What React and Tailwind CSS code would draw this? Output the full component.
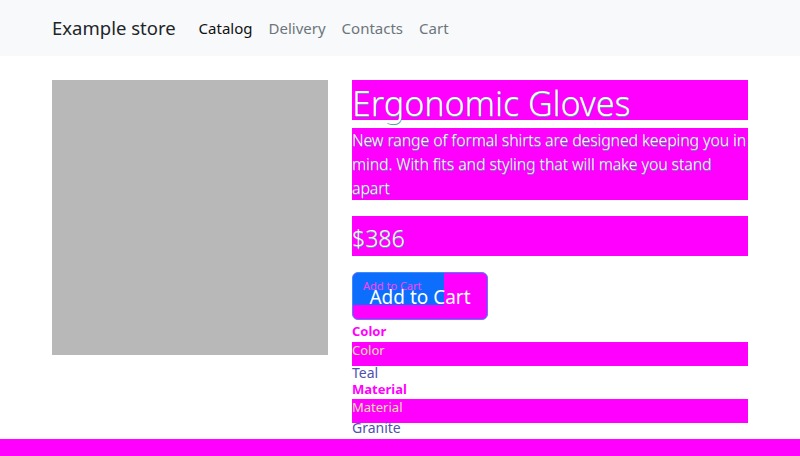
export default function App() {
  const glitch = "text-white [text-shadow:0.5px_0.5px_#5aa0a8]";
  return (
    <div className="min-h-[456px] bg-white flex flex-col [font-family:'Noto_Sans','Open_Sans',sans-serif] text-[#212529]">
      {/* Navbar */}
      <nav className="h-14 bg-[#f8f9fa] shrink-0">
        <div className="w-[720px] mx-auto px-3 h-full flex items-center">
          <span className="text-[18.5px] text-[#212529] mr-[23px]">Example store</span>
          <div className="flex items-center gap-4 text-[15px]">
            <a className="text-[#111]">Catalog</a>
            <a className="text-[#6c757d]">Delivery</a>
            <a className="text-[#6c757d]">Contacts</a>
            <a className="text-[#6c757d]">Cart</a>
          </div>
        </div>
      </nav>

      {/* Product */}
      <main className="flex-1">
        <div className="w-[720px] mx-auto mt-6 flex">
          <div className="w-[300px] px-3 shrink-0">
            <div className="w-[276px] h-[275px] bg-[#b8b8b8]" />
          </div>
          <div className="w-[420px] px-3">
            <h1 className={`h-10 bg-[#ff00ff] text-[34px] font-light leading-[46px] ${glitch}`}>
              Ergonomic Gloves
            </h1>
            <p className={`mt-2 h-[72px] bg-[#ff00ff] text-[15.7px] font-light leading-6 ${glitch}`}>
              New range of formal shirts are designed keeping you in mind. With fits and styling that will make you stand apart
            </p>
            <div className={`mt-4 h-10 bg-[#ff00ff] text-[23px] font-light leading-[44px] ${glitch}`}>
              $386
            </div>
            <button className="mt-4 relative w-[136px] h-12 rounded-md bg-[#ff00ff] border border-[#3d8bfd] overflow-hidden">
              <span className="absolute left-0 top-0 w-[91px] h-8 bg-[#0d6efd]" />
              <span className="absolute left-[10px] top-[5px] text-[11px] text-[#ff40ff] leading-4">Add to Cart</span>
              <span className="relative top-[2px] text-[19px] text-white leading-none">Add to Cart</span>
            </button>
            <div className="text-[13px] font-bold text-[#ff00ff] leading-4 mt-[3px]">Color</div>
            <div className="mt-[3px] h-6 bg-[#ff00ff] text-[13px] leading-4 text-[#e8e0a0]">Color</div>
            <div className="text-[14px] leading-[14px] text-[#5050b0]">Teal</div>
            <div className="text-[13px] font-bold text-[#ff00ff] leading-4 mt-px">Material</div>
            <div className="mt-[2px] h-6 bg-[#ff00ff] text-[13px] leading-4 text-[#e8e0a0]">Material</div>
            <div className="text-[14px] leading-[14px] text-[#5050b0] -mt-[2px]">Granite</div>
          </div>
        </div>
      </main>

      <footer className="h-[17px] bg-[#ff00ff] shrink-0 mt-auto" />
    </div>
  );
}
